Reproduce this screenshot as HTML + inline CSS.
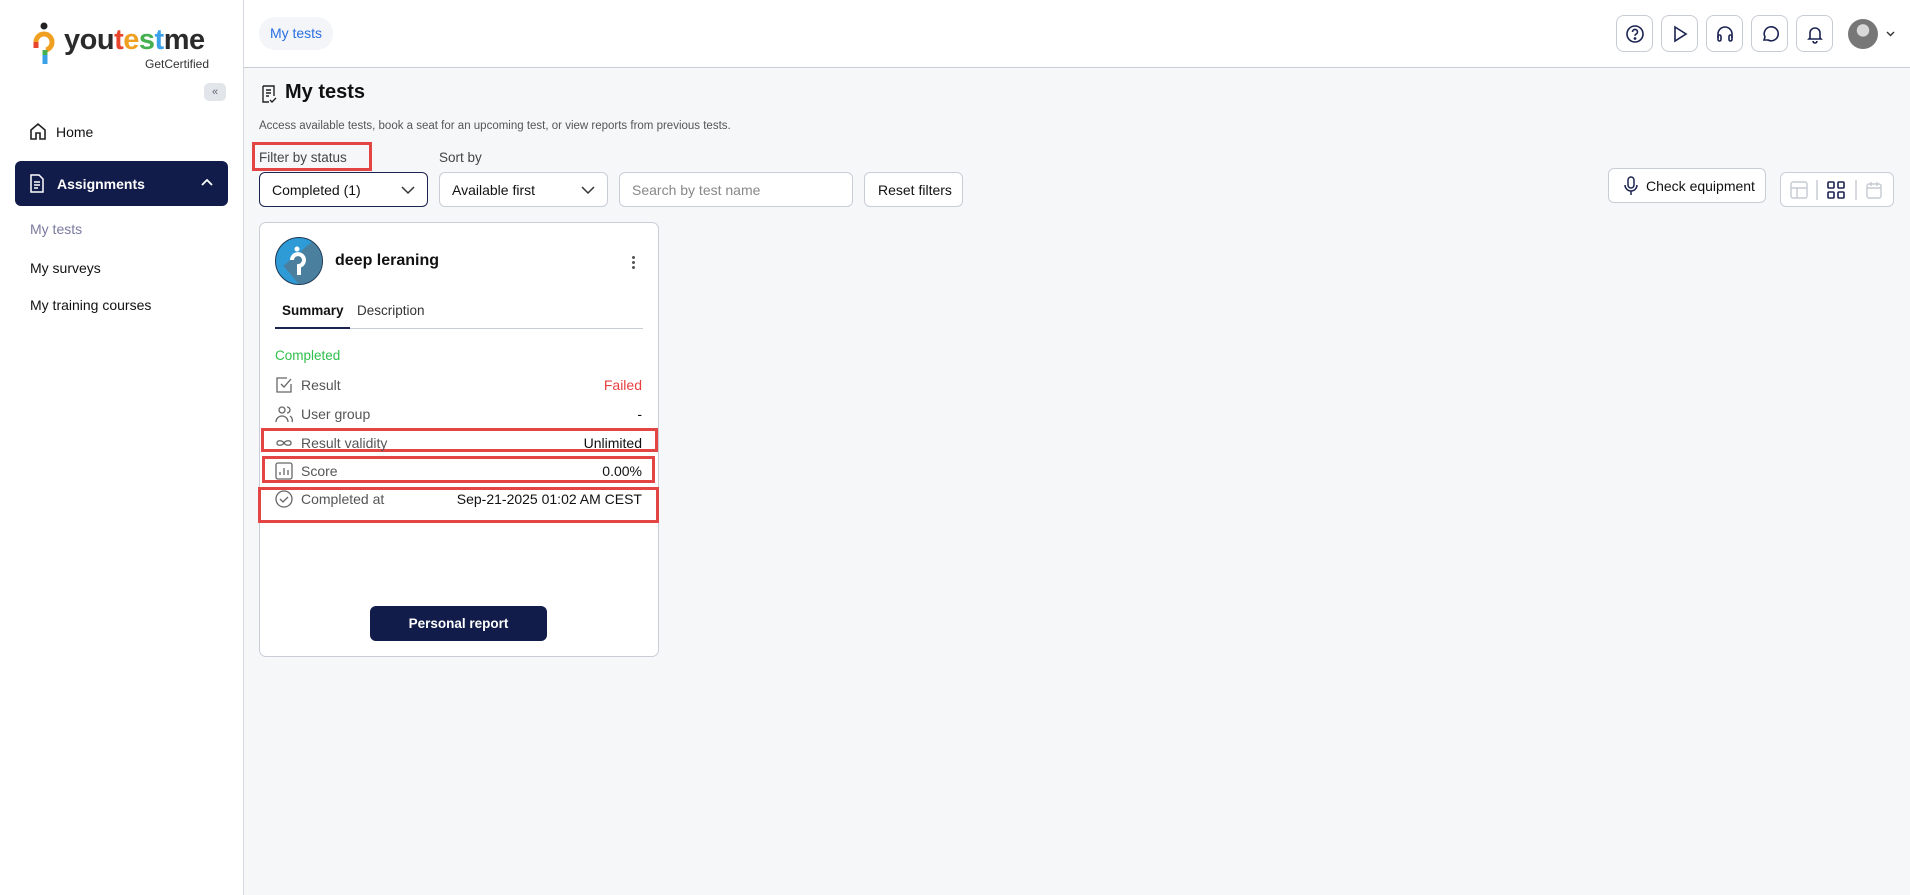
<!DOCTYPE html>
<html><head><meta charset="utf-8"><style>
*{box-sizing:border-box;margin:0;padding:0}
body{width:1910px;height:895px;overflow:hidden;font-family:"Liberation Sans",sans-serif;background:#f6f7f9;color:#111;position:relative}
.a{position:absolute}
.sb{left:0;top:0;width:244px;height:895px;background:#fff;border-right:1px solid #d5d9df}
.hd{left:244px;top:0;width:1666px;height:68px;background:#fff;border-bottom:1px solid #c9ced6}
.ib{width:37px;height:37px;border:1px solid #c7ccd4;border-radius:8px;background:#fff;top:15px;display:flex;align-items:center;justify-content:center}
.sel{height:35px;border:1px solid #c9ced6;border-radius:6px;background:#fff;font-size:14px;display:flex;align-items:center;padding-left:12px;top:172px}
.red{border:3px solid #e34444}
.row{left:275px;width:367px;font-size:14px;color:#555;display:flex;justify-content:space-between;align-items:center;height:20px}
.row span.l{display:flex;align-items:center;gap:8px}
.row b{font-weight:normal;color:#111}
</style></head><body>
<div class="a sb"></div>
<!-- logo -->
<svg class="a" style="left:32px;top:20px" width="26" height="50" viewBox="0 0 26 50"><circle cx="12" cy="6" r="3.5" fill="#222"/><path d="M4 22 a8 8 0 0 1 16 0 a8 8 0 0 1 -6 8" stroke="#f0a020" stroke-width="5" fill="none"/><path d="M4 22 v6" stroke="#e8452c" stroke-width="5"/><path d="M13 31 v13" stroke="#3aa0e8" stroke-width="5"/><path d="M13 30 v5" stroke="#45b050" stroke-width="5"/></svg>
<div class="a" style="left:64px;top:24px;font-size:29px;font-weight:bold;letter-spacing:-0.5px;color:#2b2b2b">you<span style="color:#e8452c">t</span><span style="color:#f0a020">e</span><span style="color:#45b050">s</span><span style="color:#3aa0e8">t</span>me</div>
<div class="a" style="left:145px;top:57px;font-size:12px;color:#333">GetCertified</div>
<div class="a" style="left:204px;top:83px;width:22px;height:18px;border-radius:5px;background:#e2e5ea;font-size:11px;color:#667;text-align:center;line-height:18px">«</div>
<svg class="a" style="left:29px;top:122px" width="18" height="19" viewBox="0 0 18 19" fill="none" stroke="#222" stroke-width="1.6"><path d="M2 8 L9 2 L16 8 V17 H11 V11 H7 V17 H2Z"/></svg>
<div class="a" style="left:56px;top:124px;font-size:14px">Home</div>
<div class="a" style="left:15px;top:161px;width:213px;height:45px;border-radius:6px;background:#121c4a"></div>
<svg class="a" style="left:29px;top:174px" width="16" height="19" viewBox="0 0 16 19" fill="none" stroke="#fff" stroke-width="1.5"><path d="M2 1h8l4 4v13H2z M5 8h6 M5 11h6 M5 14h4"/></svg>
<div class="a" style="left:57px;top:176px;font-size:14px;color:#fff;font-weight:bold">Assignments</div>
<svg class="a" style="left:201px;top:178px" width="12" height="10" viewBox="0 0 12 10"><path d="M1 7 L6 2 L11 7" stroke="#fff" stroke-width="1.8" fill="none"/></svg>
<div class="a" style="left:30px;top:221px;font-size:14px;color:#7a7aa0">My tests</div>
<div class="a" style="left:30px;top:260px;font-size:14px">My surveys</div>
<div class="a" style="left:30px;top:297px;font-size:14px">My training courses</div>
<!-- header -->
<div class="a hd"></div>
<div class="a" style="left:259px;top:17px;width:74px;height:33px;border-radius:16px;background:#f3f5f8;font-size:14px;color:#2a6fe0;text-align:center;line-height:33px">My tests</div>
<div class="a ib" style="left:1616px"><svg width="20" height="20" viewBox="0 0 20 20" fill="none" stroke="#1b2350" stroke-width="1.6"><circle cx="10" cy="10" r="8"/><path d="M7.5 8a2.5 2.5 0 1 1 3.5 2.2c-.8.4-1 .8-1 1.6"/><circle cx="10" cy="14.5" r=".6" fill="#1b2350"/></svg></div>
<div class="a ib" style="left:1661px"><svg width="20" height="20" viewBox="0 0 20 20" fill="none" stroke="#1b2350" stroke-width="1.6"><path d="M5 3 L16 10 L5 17Z"/></svg></div>
<div class="a ib" style="left:1706px"><svg width="20" height="20" viewBox="0 0 20 20" fill="none" stroke="#1b2350" stroke-width="1.6"><path d="M3 14v-4a7 7 0 0 1 14 0v4"/><rect x="3" y="11" width="3" height="6" rx="1.5"/><rect x="14" y="11" width="3" height="6" rx="1.5"/></svg></div>
<div class="a ib" style="left:1751px"><svg width="20" height="20" viewBox="0 0 20 20" fill="none" stroke="#1b2350" stroke-width="1.6"><path d="M4 16l1-3a7 7 0 1 1 3 3z"/></svg></div>
<div class="a ib" style="left:1796px"><svg width="20" height="20" viewBox="0 0 20 20" fill="none" stroke="#1b2350" stroke-width="1.6"><path d="M5 14V9a5 5 0 0 1 10 0v5l1 1H4z M8 17a2 2 0 0 0 4 0"/></svg></div>
<div class="a" style="left:1848px;top:19px;width:30px;height:30px;border-radius:50%;background:radial-gradient(circle at 50% 38%,#d8d8d8 0 25%,#777 27%)"></div>
<svg class="a" style="left:1886px;top:31px" width="9" height="6" viewBox="0 0 9 6"><path d="M1 1l3.5 3.5L8 1" stroke="#333" stroke-width="1.4" fill="none"/></svg>
<!-- title -->
<svg class="a" style="left:261px;top:85px" width="16" height="19" viewBox="0 0 16 19" fill="none" stroke="#222" stroke-width="1.4"><path d="M2 1h11v10 M2 1v16h6 M5 5h5 M5 8h5 M5 11h3 M9 15l2 2 4-4"/></svg>
<div class="a" style="left:285px;top:81px;font-size:20px;font-weight:bold">My tests</div>
<div class="a" style="left:259px;top:120px;font-size:11.5px;color:#555">Access available tests, book a seat for an upcoming test, or view reports from previous tests.</div>
<div class="a red" style="left:252px;top:142px;width:120px;height:29px"></div>
<div class="a" style="left:259px;top:150px;font-size:13.5px;color:#444">Filter by status</div>
<div class="a" style="left:439px;top:150px;font-size:13.5px;color:#444">Sort by</div>
<div class="a sel" style="left:259px;width:169px;border-color:#1b2350">Completed (1)<svg style="position:absolute;right:12px;top:13px" width="14" height="9" viewBox="0 0 14 9"><path d="M1 1l6 6 6-6" stroke="#333" stroke-width="1.5" fill="none"/></svg></div>
<div class="a sel" style="left:439px;width:169px">Available first<svg style="position:absolute;right:12px;top:13px" width="14" height="9" viewBox="0 0 14 9"><path d="M1 1l6 6 6-6" stroke="#333" stroke-width="1.5" fill="none"/></svg></div>
<div class="a sel" style="left:619px;width:234px;color:#888">Search by test name</div>
<div class="a sel" style="left:864px;width:99px;padding-left:13px">Reset filters</div>
<div class="a" style="left:1608px;top:168px;width:158px;height:35px;border:1px solid #c9ced6;border-radius:6px;background:#fff;font-size:14px;display:flex;align-items:center;gap:8px;padding-left:15px"><svg width="14" height="20" viewBox="0 0 14 20" fill="none" stroke="#1b2350" stroke-width="1.5"><rect x="4" y="1" width="6" height="11" rx="3"/><path d="M1 9a6 6 0 0 0 12 0 M7 15v4"/></svg>Check equipment</div>
<div class="a" style="left:1780px;top:172px;width:114px;height:35px;border:1px solid #c9ced6;border-radius:6px;background:#fff"></div>
<svg class="a" style="left:1790px;top:180px" width="100" height="20" viewBox="0 0 100 20" fill="none" stroke-width="1.4"><rect x="1" y="2" width="16" height="16" rx="2" stroke="#c5cad2"/><path d="M1 8h16 M7 8v10" stroke="#c5cad2"/><path d="M27 0v20 M66 0v20" stroke="#c5cad2"/><g stroke="#1b2350" stroke-width="1.6"><rect x="38" y="2" width="6" height="6" rx="1"/><rect x="48" y="2" width="6" height="6" rx="1"/><rect x="38" y="12" width="6" height="6" rx="1"/><rect x="48" y="12" width="6" height="6" rx="1"/></g><rect x="77" y="4" width="14" height="14" rx="2" stroke="#c5cad2"/><path d="M77 8h14 M81 2v4 M87 2v4" stroke="#c5cad2"/></svg>
<!-- card -->
<div class="a" style="left:259px;top:222px;width:400px;height:435px;background:#fff;border:1px solid #c9ced6;border-radius:7px"></div>
<div class="a" style="left:275px;top:237px;width:48px;height:48px;border-radius:50%;background:#2e9ad6;border:1px solid #1e3550;overflow:hidden"><div style="position:absolute;left:22px;top:8px;width:40px;height:60px;background:#4a7f9e;transform:rotate(-40deg)"></div><svg style="position:absolute;left:13px;top:8px" width="20" height="32" viewBox="0 0 20 32"><circle cx="8" cy="3" r="2.5" fill="#fff"/><path d="M3 14a6 6 0 1 1 7 6v9" stroke="#fff" stroke-width="4" fill="none"/></svg></div>
<div class="a" style="left:335px;top:252px;font-size:16px;font-weight:bold">deep leraning</div>
<div class="a" style="left:632px;top:256px;width:3px;height:3px;border-radius:50%;background:#555;box-shadow:0 5px #555,0 10px #555"></div>
<div class="a" style="left:282px;top:303px;font-size:13.5px;font-weight:bold">Summary</div>
<div class="a" style="left:357px;top:303px;font-size:13.5px;color:#333">Description</div>
<div class="a" style="left:275px;top:328px;width:368px;height:1px;background:#c9ced6"></div>
<div class="a" style="left:275px;top:327px;width:75px;height:2px;background:#1b2350"></div>
<div class="a" style="left:275px;top:348px;font-size:13.5px;color:#2fbf4a">Completed</div>
<div class="a row" style="top:375px"><span class="l"><svg width="18" height="18" viewBox="0 0 18 18" fill="none" stroke="#666" stroke-width="1.3"><path d="M16 8v8H2V2h10 M6 8l3 3 7-8"/></svg>Result</span><b style="color:#e84040">Failed</b></div>
<div class="a row" style="top:404px"><span class="l"><svg width="18" height="18" viewBox="0 0 18 18" fill="none" stroke="#666" stroke-width="1.3"><circle cx="7" cy="5" r="3"/><path d="M1 17a6 6 0 0 1 12 0 M12 2a3 3 0 0 1 0 6 M15 11a5 5 0 0 1 2 6"/></svg>User group</span><b>-</b></div>
<div class="a red" style="left:261px;top:428px;width:397px;height:24px"></div>
<div class="a row" style="top:433px"><span class="l"><svg width="18" height="18" viewBox="0 0 18 18" fill="none" stroke="#666" stroke-width="1.3"><path d="M9 9c-2-3-7-3-7 0s5 3 7 0 7-3 7 0-5 3-7 0"/></svg>Result validity</span><b>Unlimited</b></div>
<div class="a red" style="left:262px;top:456px;width:393px;height:27px"></div>
<div class="a row" style="top:461px"><span class="l"><svg width="18" height="18" viewBox="0 0 18 18" fill="none" stroke="#666" stroke-width="1.3"><rect x="1" y="1" width="16" height="16" rx="2"/><path d="M5 13v-3 M9 13V6 M13 13V8"/></svg>Score</span><b>0.00%</b></div>
<div class="a red" style="left:258px;top:487px;width:401px;height:36px"></div>
<div class="a row" style="top:489px"><span class="l"><svg width="18" height="18" viewBox="0 0 18 18" fill="none" stroke="#666" stroke-width="1.3"><circle cx="9" cy="9" r="8"/><path d="M5 9l3 3 5-5"/></svg>Completed at</span><b>Sep-21-2025 01:02 AM CEST</b></div>
<div class="a" style="left:370px;top:606px;width:177px;height:35px;border-radius:6px;background:#121c4a;color:#fff;font-size:13.5px;font-weight:bold;text-align:center;line-height:35px">Personal report</div>
</body></html>
